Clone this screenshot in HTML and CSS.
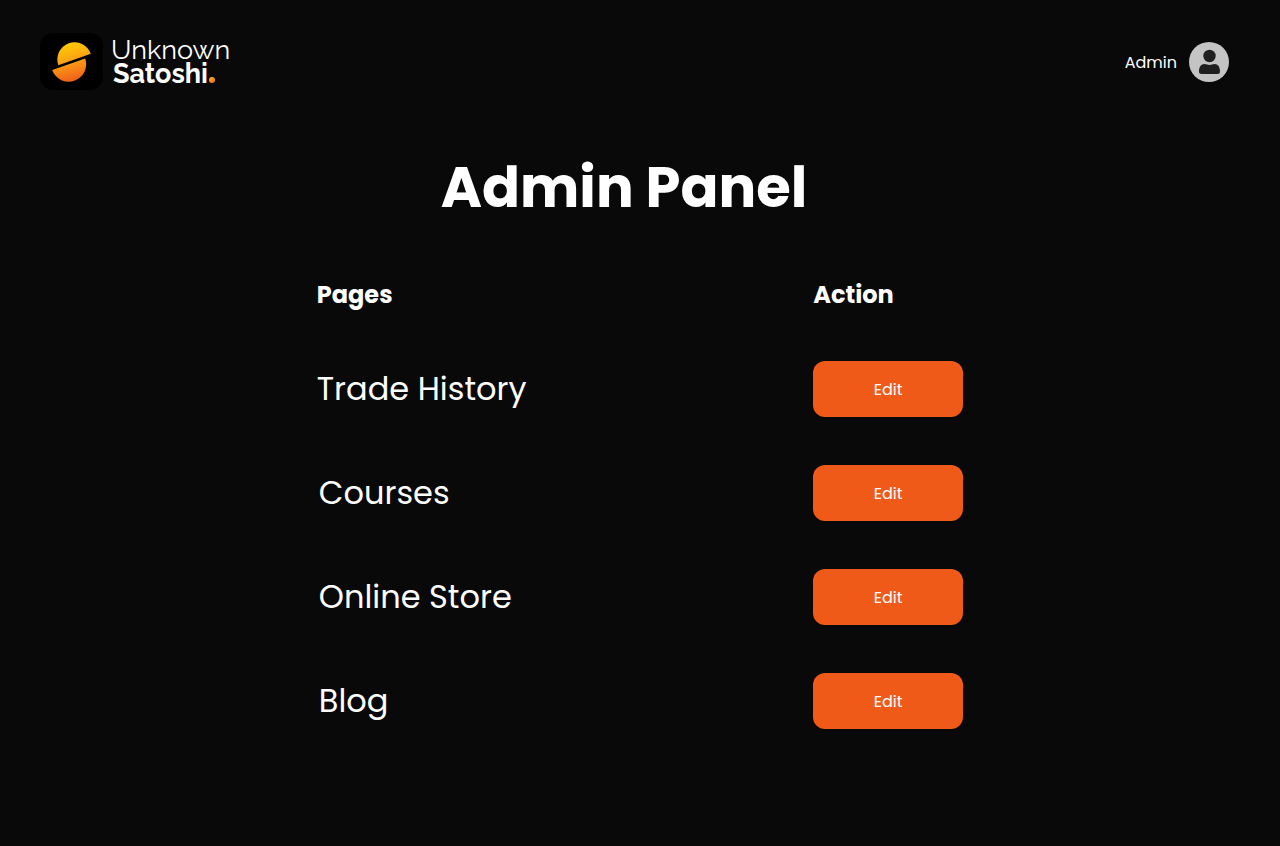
FILE: index.html
```html
<!DOCTYPE html>
<html lang="en">
<head>
<meta charset="utf-8">
<meta name="viewport" content="width=device-width, initial-scale=1">
<title>Admin Panel</title>
<link rel="stylesheet" href="styles.css">
</head>
<body>
<header class="topbar">
  <a class="brand" href="#">
    <svg class="brand-mark" viewBox="0 0 63 57" aria-hidden="true">
      <defs>
        <linearGradient id="sun" gradientUnits="userSpaceOnUse" x1="26" y1="9" x2="36" y2="49">
          <stop offset="0" stop-color="#ffcf05"/>
          <stop offset="0.45" stop-color="#fba313"/>
          <stop offset="1" stop-color="#f1591c"/>
        </linearGradient>
      </defs>
      <rect width="63" height="57" rx="13" fill="#000"/>
      <path d="M18.3 32.2A17.2 17.2 0 0 1 50.8 20.7Z" fill="url(#sun)"/>
      <path d="M45.2 25.6A17.2 17.2 0 0 1 12.2 36.9Z" fill="url(#sun)"/>
    </svg>
    <span class="brand-name">
      <span class="brand-light">Unknown</span>
      <span class="brand-bold">Satoshi<span class="brand-dot"></span></span>
    </span>
  </a>
  <a class="account" href="#">
    <span class="account-name">Admin</span>
    <svg class="avatar" viewBox="0 0 40 40" aria-hidden="true">
      <circle cx="20" cy="20" r="20" fill="#c4c4c4"/>
      <circle cx="20.5" cy="14" r="6.2" fill="#202020"/>
      <path d="M10 29.500C10 25 12 22 15.500 22C17.500 22 18.500 22.900 20.500 22.900S23.500 22 25.500 22C29 22 31 25 31 29.500Q31 32 28.500 32H12.500Q10 32 10 29.500Z" fill="#202020"/>
    </svg>
  </a>
</header>
<main class="panel">
  <h1 class="title">Admin Panel</h1>
  <table class="pages">
    <thead>
      <tr><th scope="col">Pages</th><th scope="col" class="action">Action</th></tr>
    </thead>
    <tbody>
      <tr><td>Trade History</td><td class="action"><button class="edit" type="button">Edit</button></td></tr>
      <tr><td class="name">Courses</td><td class="action"><button class="edit" type="button">Edit</button></td></tr>
      <tr><td class="name">Online Store</td><td class="action"><button class="edit" type="button">Edit</button></td></tr>
      <tr><td class="name">Blog</td><td class="action"><button class="edit" type="button">Edit</button></td></tr>
    </tbody>
  </table>
</main>
</body>
</html>
```
FILE: styles.css
```css
* { box-sizing: border-box; }

body {
  margin: 0;
  background: #090909;
  color: #fff;
  font-family: Poppins, Inter, sans-serif;
  font-size: 16px;
  line-height: 24px;
}

a { color: inherit; text-decoration: none; }

.topbar {
  display: flex;
  align-items: center;
  justify-content: space-between;
  padding: 33px 51px 0 40px;
}

.brand { display: flex; align-items: center; gap: 8px; }
.brand-mark { width: 63px; height: 57px; }
.brand-name {
  display: flex;
  flex-direction: column;
  font-family: Raleway, Lato, sans-serif;
  font-size: 27px;
  line-height: 24px;
}
.brand-light { font-weight: 400; }
.brand-bold { padding-left: 2px; font-weight: 700; }
.brand-dot {
  display: inline-block;
  width: 6px;
  height: 6px;
  margin-left: 1px;
  border-radius: 50%;
  background: linear-gradient(160deg, #ffb80c, #f1691c);
}

.account { display: flex; align-items: center; gap: 12px; }
.account-name { padding-top: 2px; }
.avatar { width: 40px; height: 40px; }

.title {
  margin: 56px 0 0;
  padding-right: 32px;
  font-size: 56px;
  font-weight: 700;
  line-height: 84px;
  text-align: center;
}

.pages {
  width: 50.5%;
  min-width: 480px;
  margin: 47px auto 0;
  border-collapse: collapse;
}
.pages th {
  height: 60px;
  padding: 0;
  font-size: 24px;
  font-weight: 700;
  line-height: 36px;
  text-align: left;
  vertical-align: top;
}
.pages td {
  height: 104px;
  padding: 0;
  font-size: 32px;
  line-height: 48px;
}
.pages .name { padding-left: 2px; }
.pages .action { width: 150px; }

.edit {
  display: block;
  width: 100%;
  height: 56px;
  padding: 1px 0 0;
  border: 0;
  border-radius: 12px;
  background: #f05a19;
  color: #fff;
  font: inherit;
  font-size: 16px;
  line-height: 24px;
  cursor: pointer;
}
```
